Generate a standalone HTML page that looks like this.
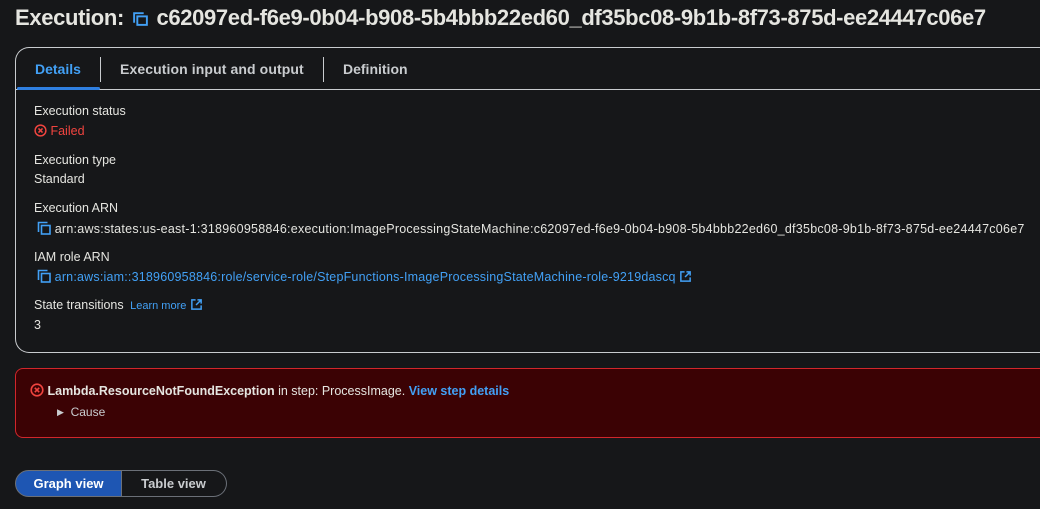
<!DOCTYPE html>
<html><head><meta charset="utf-8">
<style>
*{margin:0;padding:0;box-sizing:border-box}
body{width:1040px;height:509px;overflow:hidden;background:#161719;font-family:"Liberation Sans",sans-serif;color:#e9e9e6;position:relative;font-size:12.5px}
.abs{position:absolute;white-space:nowrap}
h1{position:absolute;left:15px;top:5px;font-size:22px;font-weight:bold;color:#e5e5e0;letter-spacing:-0.35px;white-space:nowrap}
.card{position:absolute;left:15px;top:47px;width:1100px;height:306px;border:1px solid #c9cccf;border-radius:14px;border-right:none}
.tabline{position:absolute;left:16px;top:89px;width:1030px;height:1px;background:#c9cccf}
.tab{position:absolute;top:61px;font-size:14px;font-weight:bold;color:#c9cccf}
.sep{position:absolute;top:57px;width:1px;height:25px;background:#c9cccf}
.lbl{position:absolute;left:34px;font-size:12.5px;color:#e5e5e0;white-space:nowrap}
.blue{color:#42a0f5}
.err{position:absolute;left:15px;top:368px;width:1100px;height:70px;background:#3b0204;border:1px solid #d1262b;border-radius:8px}
.btn{position:absolute;top:470px;height:27px;font-size:13px;font-weight:bold;display:flex;align-items:center;justify-content:center}
</style></head><body>
<h1>Execution: <svg width="17" height="17" viewBox="0 0 16 16" style="vertical-align:-2px;margin:0 2px"><path d="M2 12V3h9" fill="none" stroke="#42a0f5" stroke-width="1.8"/><rect x="5" y="6" width="9" height="8" fill="none" stroke="#42a0f5" stroke-width="1.8"/></svg> c62097ed-f6e9-0b04-b908-5b4bbb22ed60_df35bc08-9b1b-8f73-875d-ee24447c06e7</h1>
<div class="card"></div>
<div class="tabline"></div>
<div style="position:absolute;left:17px;top:87px;width:83px;height:3px;background:#2f7fe0;border-radius:2px"></div>
<div class="tab" style="left:35px;color:#42a0f5">Details</div>
<div class="sep" style="left:100px"></div>
<div class="tab" style="left:120px;letter-spacing:0.1px">Execution input and output</div>
<div class="sep" style="left:323px"></div>
<div class="tab" style="left:343px">Definition</div>

<div class="lbl" style="top:104px">Execution status</div>
<div class="lbl" style="top:124px;color:#f0443f"><svg width="13" height="13" viewBox="0 0 14 14" style="vertical-align:-2px"><circle cx="7" cy="7" r="5.8" fill="none" stroke="#f0443f" stroke-width="1.6"/><path d="M4.8 4.8l4.4 4.4M9.2 4.8l-4.4 4.4" stroke="#f0443f" stroke-width="1.6"/></svg> Failed</div>
<div class="lbl" style="top:153px">Execution type</div>
<div class="lbl" style="top:172px">Standard</div>
<div class="lbl" style="top:201px">Execution ARN</div>
<div class="lbl" style="top:221px;left:37px;letter-spacing:0.25px"><svg width="14" height="14" viewBox="0 0 14 14" style="vertical-align:-2px"><path d="M1.5 11V1.5h9" fill="none" stroke="#42a0f5" stroke-width="1.6"/><rect x="4.5" y="4.5" width="8.5" height="8.5" fill="none" stroke="#42a0f5" stroke-width="1.6"/></svg> arn:aws:states:us-east-1:318960958846:execution:ImageProcessingStateMachine:c62097ed-f6e9-0b04-b908-5b4bbb22ed60_df35bc08-9b1b-8f73-875d-ee24447c06e7</div>
<div class="lbl" style="top:250px">IAM role ARN</div>
<div class="lbl blue" style="top:269px;left:37px;letter-spacing:0.2px"><svg width="14" height="14" viewBox="0 0 14 14" style="vertical-align:-2px"><path d="M1.5 11V1.5h9" fill="none" stroke="#42a0f5" stroke-width="1.6"/><rect x="4.5" y="4.5" width="8.5" height="8.5" fill="none" stroke="#42a0f5" stroke-width="1.6"/></svg> arn:aws:iam::318960958846:role/service-role/StepFunctions-ImageProcessingStateMachine-role-9219dascq <svg width="13" height="13" viewBox="0 0 14 14" style="vertical-align:-2px"><path d="M6 2H2v10h10V8" fill="none" stroke="#42a0f5" stroke-width="1.6"/><path d="M8 2h4v4M12 2L6.5 7.5" fill="none" stroke="#42a0f5" stroke-width="1.6"/></svg></div>
<div class="lbl" style="top:298px">State transitions <span class="blue" style="font-size:11px;margin-left:3px">Learn more</span> <svg width="13" height="13" viewBox="0 0 14 14" style="vertical-align:-2px"><path d="M6 2H2v10h10V8" fill="none" stroke="#42a0f5" stroke-width="1.6"/><path d="M8 2h4v4M12 2L6.5 7.5" fill="none" stroke="#42a0f5" stroke-width="1.6"/></svg></div>
<div class="lbl" style="top:318px">3</div>

<div class="err"></div>
<div class="abs" style="left:30px;top:383px;font-size:12.5px;color:#e5e5e0"><svg width="14" height="14" viewBox="0 0 14 14" style="vertical-align:-2px"><circle cx="7" cy="7" r="5.8" fill="none" stroke="#f0443f" stroke-width="1.6"/><path d="M4.8 4.8l4.4 4.4M9.2 4.8l-4.4 4.4" stroke="#f0443f" stroke-width="1.6"/></svg> <b>Lambda.ResourceNotFoundException</b> in step: ProcessImage. <b class="blue">View step details</b></div>
<div class="abs" style="left:57px;top:405px;font-size:12px;color:#c9cccf"><span style="font-size:9px;vertical-align:1px">&#9654;</span>&nbsp; Cause</div>

<div class="btn" style="left:15px;width:107px;background:#1e56b3;border:1px solid #6b7078;border-radius:14px 0 0 14px;color:#fff">Graph view</div>
<div class="btn" style="left:121px;width:106px;border:1px solid #6b7078;border-left:none;border-radius:0 14px 14px 0;color:#c9cccf">Table view</div>
</body></html>
